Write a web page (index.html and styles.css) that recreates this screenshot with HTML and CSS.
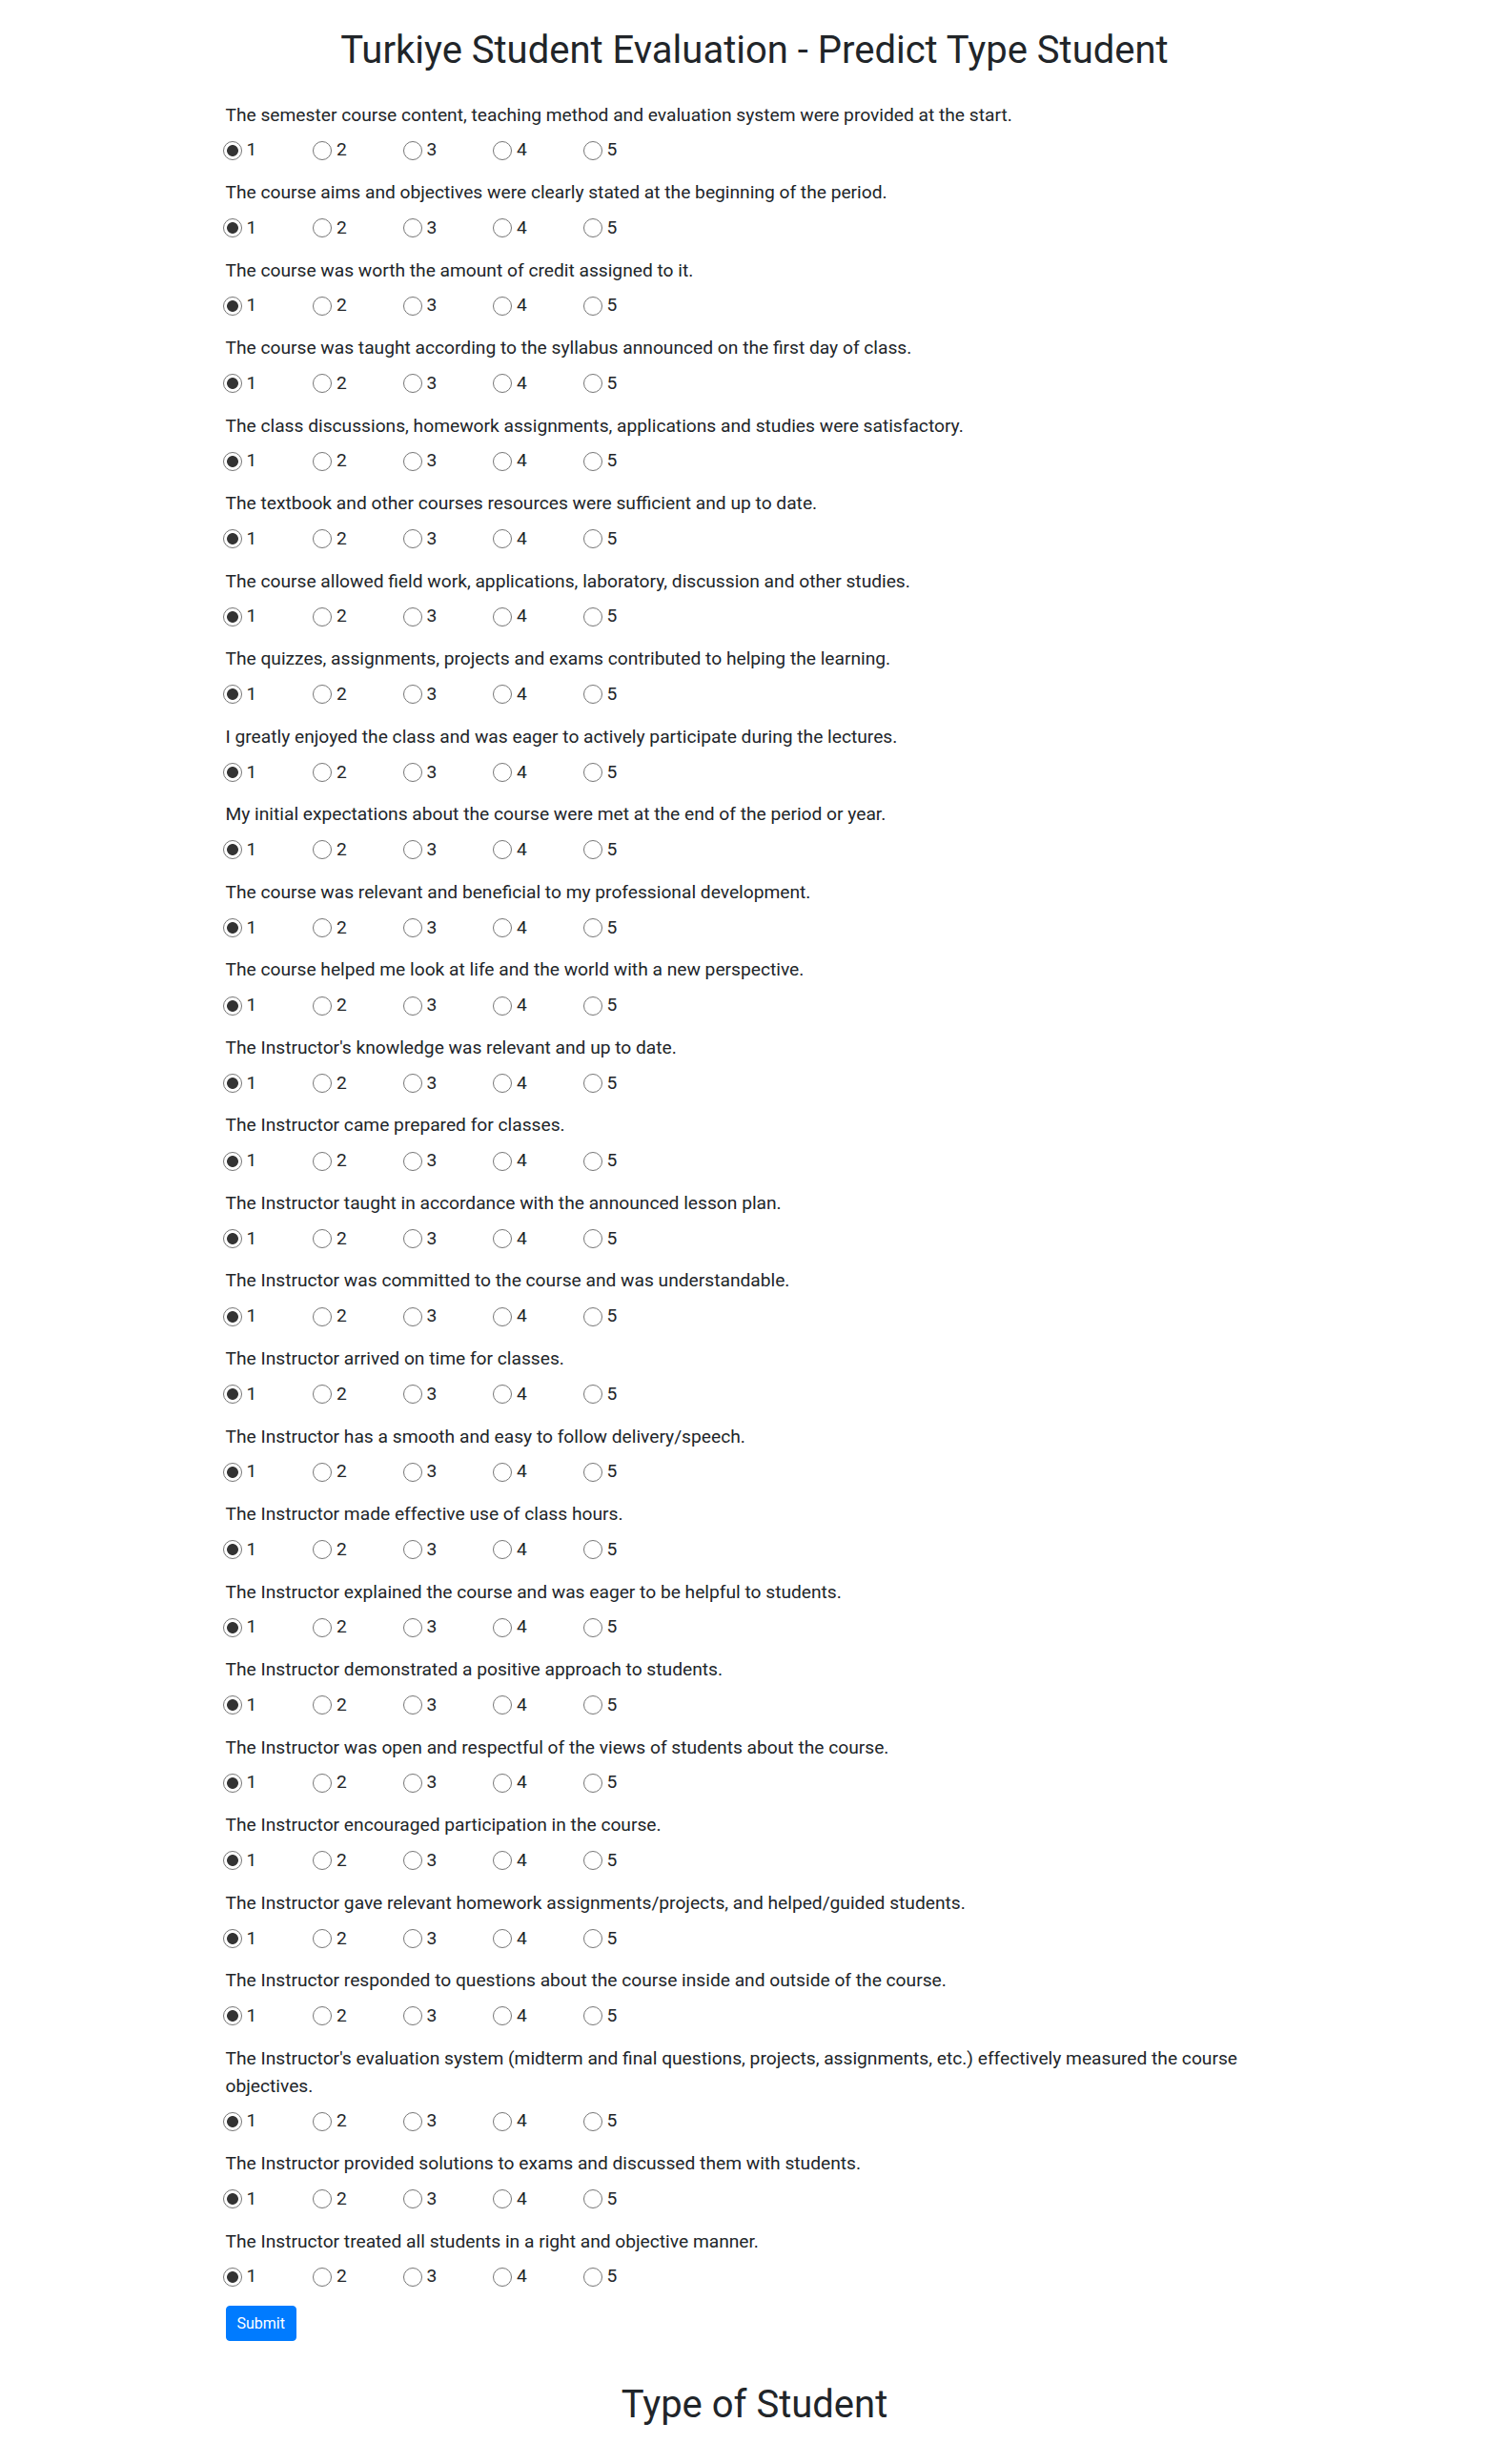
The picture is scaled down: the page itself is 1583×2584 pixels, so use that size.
FILE: index.html
```html
<!DOCTYPE html>
<html lang="en">
<head>
<meta charset="utf-8">
<title>Turkiye Student Evaluation - Predict Type Student</title>
<link rel="stylesheet" href="styles.css">
</head>
<body>
<div class="container">
  <h1 class="title">Turkiye Student Evaluation - Predict Type Student</h1>
  <form class="survey">
    <div class="question"><label class="q-label">The semester course content, teaching method and evaluation system were provided at the start.</label>
      <div class="options"><label class="opt"><input type="radio" name="q1" checked><span>1</span></label><label class="opt"><input type="radio" name="q1"><span>2</span></label><label class="opt"><input type="radio" name="q1"><span>3</span></label><label class="opt"><input type="radio" name="q1"><span>4</span></label><label class="opt"><input type="radio" name="q1"><span>5</span></label></div></div>
    <div class="question"><label class="q-label">The course aims and objectives were clearly stated at the beginning of the period.</label>
      <div class="options"><label class="opt"><input type="radio" name="q2" checked><span>1</span></label><label class="opt"><input type="radio" name="q2"><span>2</span></label><label class="opt"><input type="radio" name="q2"><span>3</span></label><label class="opt"><input type="radio" name="q2"><span>4</span></label><label class="opt"><input type="radio" name="q2"><span>5</span></label></div></div>
    <div class="question"><label class="q-label">The course was worth the amount of credit assigned to it.</label>
      <div class="options"><label class="opt"><input type="radio" name="q3" checked><span>1</span></label><label class="opt"><input type="radio" name="q3"><span>2</span></label><label class="opt"><input type="radio" name="q3"><span>3</span></label><label class="opt"><input type="radio" name="q3"><span>4</span></label><label class="opt"><input type="radio" name="q3"><span>5</span></label></div></div>
    <div class="question"><label class="q-label">The course was taught according to the syllabus announced on the first day of class.</label>
      <div class="options"><label class="opt"><input type="radio" name="q4" checked><span>1</span></label><label class="opt"><input type="radio" name="q4"><span>2</span></label><label class="opt"><input type="radio" name="q4"><span>3</span></label><label class="opt"><input type="radio" name="q4"><span>4</span></label><label class="opt"><input type="radio" name="q4"><span>5</span></label></div></div>
    <div class="question"><label class="q-label">The class discussions, homework assignments, applications and studies were satisfactory.</label>
      <div class="options"><label class="opt"><input type="radio" name="q5" checked><span>1</span></label><label class="opt"><input type="radio" name="q5"><span>2</span></label><label class="opt"><input type="radio" name="q5"><span>3</span></label><label class="opt"><input type="radio" name="q5"><span>4</span></label><label class="opt"><input type="radio" name="q5"><span>5</span></label></div></div>
    <div class="question"><label class="q-label">The textbook and other courses resources were sufficient and up to date.</label>
      <div class="options"><label class="opt"><input type="radio" name="q6" checked><span>1</span></label><label class="opt"><input type="radio" name="q6"><span>2</span></label><label class="opt"><input type="radio" name="q6"><span>3</span></label><label class="opt"><input type="radio" name="q6"><span>4</span></label><label class="opt"><input type="radio" name="q6"><span>5</span></label></div></div>
    <div class="question"><label class="q-label">The course allowed field work, applications, laboratory, discussion and other studies.</label>
      <div class="options"><label class="opt"><input type="radio" name="q7" checked><span>1</span></label><label class="opt"><input type="radio" name="q7"><span>2</span></label><label class="opt"><input type="radio" name="q7"><span>3</span></label><label class="opt"><input type="radio" name="q7"><span>4</span></label><label class="opt"><input type="radio" name="q7"><span>5</span></label></div></div>
    <div class="question"><label class="q-label">The quizzes, assignments, projects and exams contributed to helping the learning.</label>
      <div class="options"><label class="opt"><input type="radio" name="q8" checked><span>1</span></label><label class="opt"><input type="radio" name="q8"><span>2</span></label><label class="opt"><input type="radio" name="q8"><span>3</span></label><label class="opt"><input type="radio" name="q8"><span>4</span></label><label class="opt"><input type="radio" name="q8"><span>5</span></label></div></div>
    <div class="question"><label class="q-label">I greatly enjoyed the class and was eager to actively participate during the lectures.</label>
      <div class="options"><label class="opt"><input type="radio" name="q9" checked><span>1</span></label><label class="opt"><input type="radio" name="q9"><span>2</span></label><label class="opt"><input type="radio" name="q9"><span>3</span></label><label class="opt"><input type="radio" name="q9"><span>4</span></label><label class="opt"><input type="radio" name="q9"><span>5</span></label></div></div>
    <div class="question"><label class="q-label">My initial expectations about the course were met at the end of the period or year.</label>
      <div class="options"><label class="opt"><input type="radio" name="q10" checked><span>1</span></label><label class="opt"><input type="radio" name="q10"><span>2</span></label><label class="opt"><input type="radio" name="q10"><span>3</span></label><label class="opt"><input type="radio" name="q10"><span>4</span></label><label class="opt"><input type="radio" name="q10"><span>5</span></label></div></div>
    <div class="question"><label class="q-label">The course was relevant and beneficial to my professional development.</label>
      <div class="options"><label class="opt"><input type="radio" name="q11" checked><span>1</span></label><label class="opt"><input type="radio" name="q11"><span>2</span></label><label class="opt"><input type="radio" name="q11"><span>3</span></label><label class="opt"><input type="radio" name="q11"><span>4</span></label><label class="opt"><input type="radio" name="q11"><span>5</span></label></div></div>
    <div class="question"><label class="q-label">The course helped me look at life and the world with a new perspective.</label>
      <div class="options"><label class="opt"><input type="radio" name="q12" checked><span>1</span></label><label class="opt"><input type="radio" name="q12"><span>2</span></label><label class="opt"><input type="radio" name="q12"><span>3</span></label><label class="opt"><input type="radio" name="q12"><span>4</span></label><label class="opt"><input type="radio" name="q12"><span>5</span></label></div></div>
    <div class="question"><label class="q-label">The Instructor's knowledge was relevant and up to date.</label>
      <div class="options"><label class="opt"><input type="radio" name="q13" checked><span>1</span></label><label class="opt"><input type="radio" name="q13"><span>2</span></label><label class="opt"><input type="radio" name="q13"><span>3</span></label><label class="opt"><input type="radio" name="q13"><span>4</span></label><label class="opt"><input type="radio" name="q13"><span>5</span></label></div></div>
    <div class="question"><label class="q-label">The Instructor came prepared for classes.</label>
      <div class="options"><label class="opt"><input type="radio" name="q14" checked><span>1</span></label><label class="opt"><input type="radio" name="q14"><span>2</span></label><label class="opt"><input type="radio" name="q14"><span>3</span></label><label class="opt"><input type="radio" name="q14"><span>4</span></label><label class="opt"><input type="radio" name="q14"><span>5</span></label></div></div>
    <div class="question"><label class="q-label">The Instructor taught in accordance with the announced lesson plan.</label>
      <div class="options"><label class="opt"><input type="radio" name="q15" checked><span>1</span></label><label class="opt"><input type="radio" name="q15"><span>2</span></label><label class="opt"><input type="radio" name="q15"><span>3</span></label><label class="opt"><input type="radio" name="q15"><span>4</span></label><label class="opt"><input type="radio" name="q15"><span>5</span></label></div></div>
    <div class="question"><label class="q-label">The Instructor was committed to the course and was understandable.</label>
      <div class="options"><label class="opt"><input type="radio" name="q16" checked><span>1</span></label><label class="opt"><input type="radio" name="q16"><span>2</span></label><label class="opt"><input type="radio" name="q16"><span>3</span></label><label class="opt"><input type="radio" name="q16"><span>4</span></label><label class="opt"><input type="radio" name="q16"><span>5</span></label></div></div>
    <div class="question"><label class="q-label">The Instructor arrived on time for classes.</label>
      <div class="options"><label class="opt"><input type="radio" name="q17" checked><span>1</span></label><label class="opt"><input type="radio" name="q17"><span>2</span></label><label class="opt"><input type="radio" name="q17"><span>3</span></label><label class="opt"><input type="radio" name="q17"><span>4</span></label><label class="opt"><input type="radio" name="q17"><span>5</span></label></div></div>
    <div class="question"><label class="q-label">The Instructor has a smooth and easy to follow delivery/speech.</label>
      <div class="options"><label class="opt"><input type="radio" name="q18" checked><span>1</span></label><label class="opt"><input type="radio" name="q18"><span>2</span></label><label class="opt"><input type="radio" name="q18"><span>3</span></label><label class="opt"><input type="radio" name="q18"><span>4</span></label><label class="opt"><input type="radio" name="q18"><span>5</span></label></div></div>
    <div class="question"><label class="q-label">The Instructor made effective use of class hours.</label>
      <div class="options"><label class="opt"><input type="radio" name="q19" checked><span>1</span></label><label class="opt"><input type="radio" name="q19"><span>2</span></label><label class="opt"><input type="radio" name="q19"><span>3</span></label><label class="opt"><input type="radio" name="q19"><span>4</span></label><label class="opt"><input type="radio" name="q19"><span>5</span></label></div></div>
    <div class="question"><label class="q-label">The Instructor explained the course and was eager to be helpful to students.</label>
      <div class="options"><label class="opt"><input type="radio" name="q20" checked><span>1</span></label><label class="opt"><input type="radio" name="q20"><span>2</span></label><label class="opt"><input type="radio" name="q20"><span>3</span></label><label class="opt"><input type="radio" name="q20"><span>4</span></label><label class="opt"><input type="radio" name="q20"><span>5</span></label></div></div>
    <div class="question"><label class="q-label">The Instructor demonstrated a positive approach to students.</label>
      <div class="options"><label class="opt"><input type="radio" name="q21" checked><span>1</span></label><label class="opt"><input type="radio" name="q21"><span>2</span></label><label class="opt"><input type="radio" name="q21"><span>3</span></label><label class="opt"><input type="radio" name="q21"><span>4</span></label><label class="opt"><input type="radio" name="q21"><span>5</span></label></div></div>
    <div class="question"><label class="q-label">The Instructor was open and respectful of the views of students about the course.</label>
      <div class="options"><label class="opt"><input type="radio" name="q22" checked><span>1</span></label><label class="opt"><input type="radio" name="q22"><span>2</span></label><label class="opt"><input type="radio" name="q22"><span>3</span></label><label class="opt"><input type="radio" name="q22"><span>4</span></label><label class="opt"><input type="radio" name="q22"><span>5</span></label></div></div>
    <div class="question"><label class="q-label">The Instructor encouraged participation in the course.</label>
      <div class="options"><label class="opt"><input type="radio" name="q23" checked><span>1</span></label><label class="opt"><input type="radio" name="q23"><span>2</span></label><label class="opt"><input type="radio" name="q23"><span>3</span></label><label class="opt"><input type="radio" name="q23"><span>4</span></label><label class="opt"><input type="radio" name="q23"><span>5</span></label></div></div>
    <div class="question"><label class="q-label">The Instructor gave relevant homework assignments/projects, and helped/guided students.</label>
      <div class="options"><label class="opt"><input type="radio" name="q24" checked><span>1</span></label><label class="opt"><input type="radio" name="q24"><span>2</span></label><label class="opt"><input type="radio" name="q24"><span>3</span></label><label class="opt"><input type="radio" name="q24"><span>4</span></label><label class="opt"><input type="radio" name="q24"><span>5</span></label></div></div>
    <div class="question"><label class="q-label">The Instructor responded to questions about the course inside and outside of the course.</label>
      <div class="options"><label class="opt"><input type="radio" name="q25" checked><span>1</span></label><label class="opt"><input type="radio" name="q25"><span>2</span></label><label class="opt"><input type="radio" name="q25"><span>3</span></label><label class="opt"><input type="radio" name="q25"><span>4</span></label><label class="opt"><input type="radio" name="q25"><span>5</span></label></div></div>
    <div class="question"><label class="q-label">The Instructor's evaluation system (midterm and final questions, projects, assignments, etc.) effectively measured the course objectives.</label>
      <div class="options"><label class="opt"><input type="radio" name="q26" checked><span>1</span></label><label class="opt"><input type="radio" name="q26"><span>2</span></label><label class="opt"><input type="radio" name="q26"><span>3</span></label><label class="opt"><input type="radio" name="q26"><span>4</span></label><label class="opt"><input type="radio" name="q26"><span>5</span></label></div></div>
    <div class="question"><label class="q-label">The Instructor provided solutions to exams and discussed them with students.</label>
      <div class="options"><label class="opt"><input type="radio" name="q27" checked><span>1</span></label><label class="opt"><input type="radio" name="q27"><span>2</span></label><label class="opt"><input type="radio" name="q27"><span>3</span></label><label class="opt"><input type="radio" name="q27"><span>4</span></label><label class="opt"><input type="radio" name="q27"><span>5</span></label></div></div>
    <div class="question"><label class="q-label">The Instructor treated all students in a right and objective manner.</label>
      <div class="options"><label class="opt"><input type="radio" name="q28" checked><span>1</span></label><label class="opt"><input type="radio" name="q28"><span>2</span></label><label class="opt"><input type="radio" name="q28"><span>3</span></label><label class="opt"><input type="radio" name="q28"><span>4</span></label><label class="opt"><input type="radio" name="q28"><span>5</span></label></div></div>
    <button type="button" class="btn-submit">Submit</button>
  </form>
  <h1 class="result-title">Type of Student</h1>
</div>
</body>
</html>
```
FILE: styles.css
```css
* { box-sizing: border-box; }
html, body { margin: 0; padding: 0; background: #fff; }
body {
  font-family: Roboto, "Liberation Sans", Arial, sans-serif;
  color: #212529;
  font-size: 16px;
  line-height: 1.5;
}
.container {
  max-width: 1140px;
  margin: 0 auto;
  padding: 0 15px;
}
.title {
  font-size: 40px;
  font-weight: 400;
  line-height: 48px;
  text-align: center;
  margin: 28.5px 0 30px;
}
.survey { display: block; }
.question { margin-bottom: 15.95px; }
.q-label {
  display: block;
  font-size: 19.2px;
  line-height: 28.8px;
  margin-bottom: 8px;
}
.options {
  display: flex;
  height: 28.8px;
  align-items: center;
  font-size: 19.2px;
}
.opt {
  width: 94.5px;
  display: flex;
  align-items: center;
}
.opt input {
  -webkit-appearance: none;
  appearance: none;
  width: 20px;
  height: 20px;
  margin: 0 5px 0 -3px;
  border: 1.5px solid #767676;
  border-radius: 50%;
  background: #fff;
  flex: none;
}
.opt input:checked {
  background: radial-gradient(circle, #333 0, #333 5.5px, #fff 6.3px);
}
.btn-submit {
  display: block;
  font-family: inherit;
  font-size: 16px;
  line-height: 24px;
  color: #fff;
  background: #007bff;
  border: 1px solid #007bff;
  border-radius: 4px;
  padding: 6px 11px;
  height: 37px;
  margin-top: 1px;
}
.result-title {
  font-size: 40px;
  font-weight: 400;
  line-height: 48px;
  text-align: center;
  margin: 43px 0 20px;
}
```
